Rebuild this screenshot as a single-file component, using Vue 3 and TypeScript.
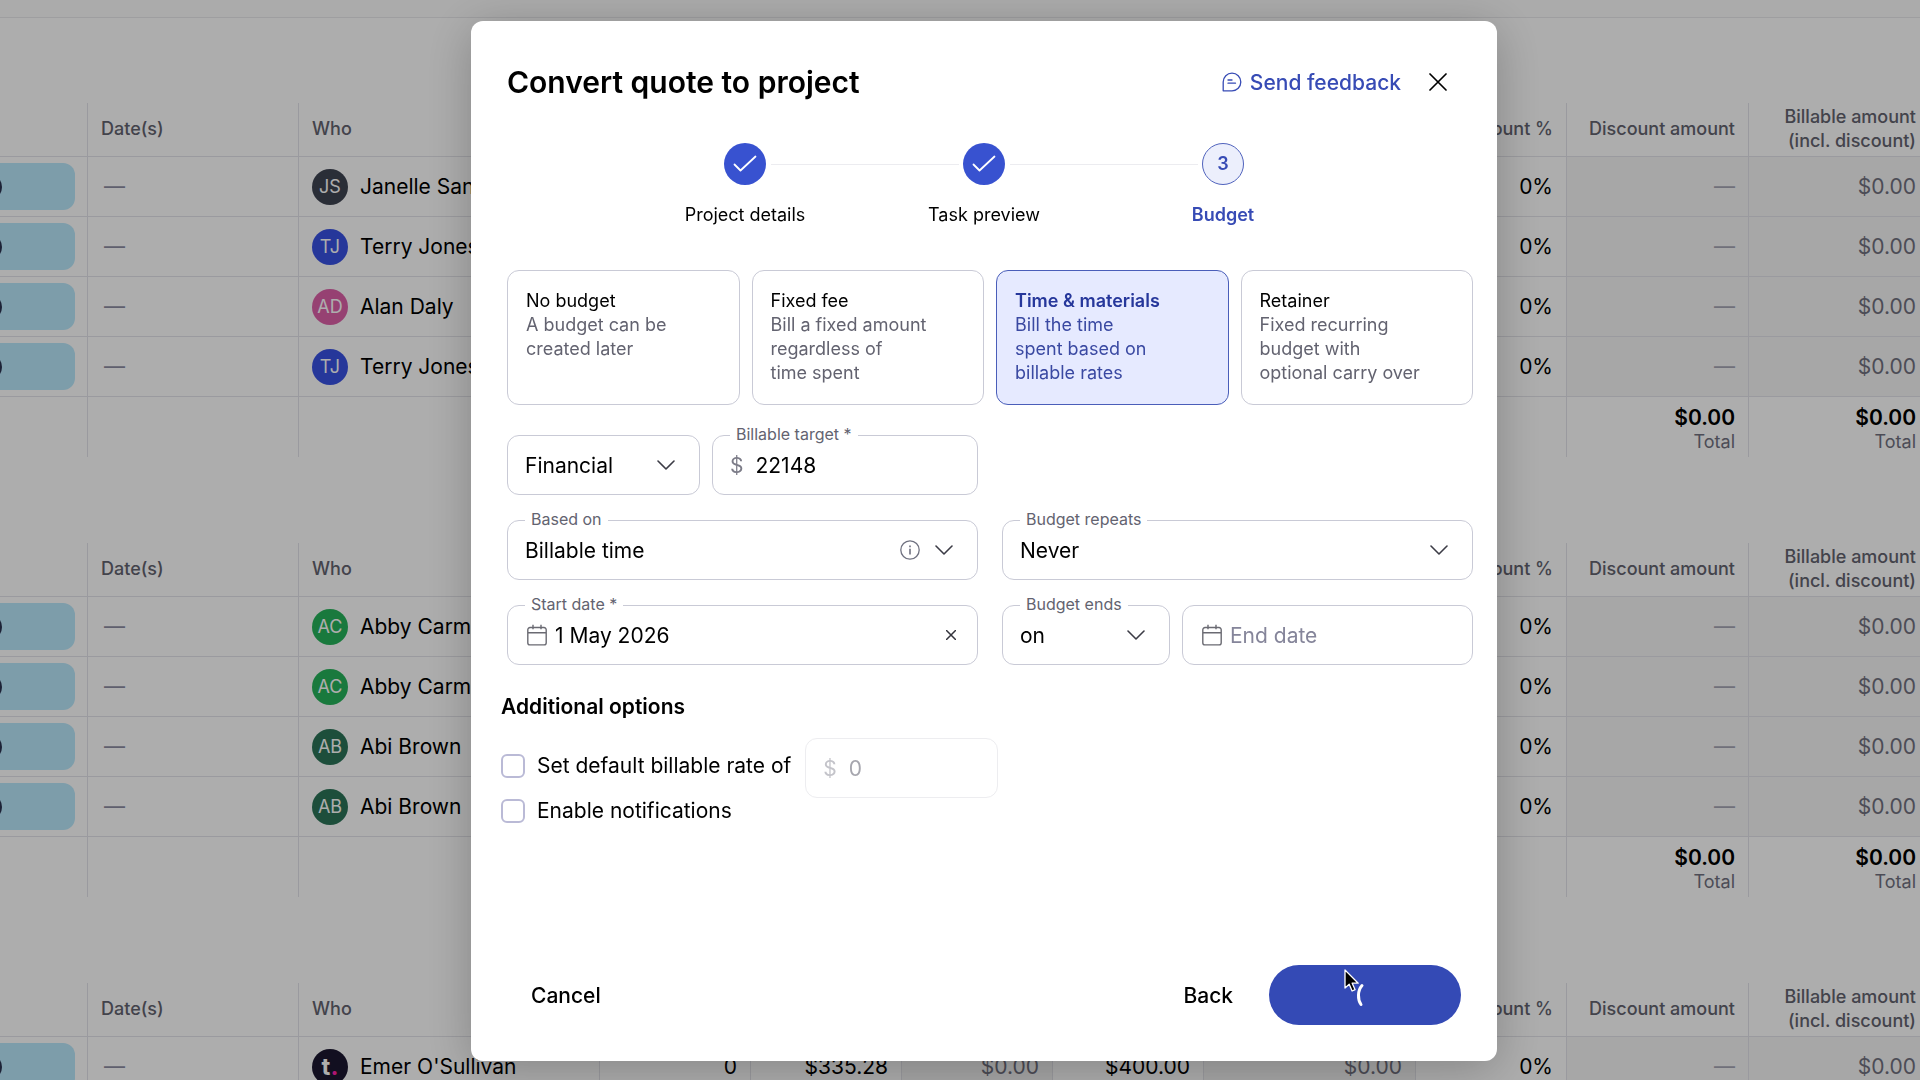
<script setup lang="ts">
import { ref } from 'vue'

interface Row {
  initials: string
  color: string
  name: string
  figures?: string[]
}

interface Group {
  rows: Row[]
  totals: boolean
}

const groups: Group[] = [
  {
    totals: true,
    rows: [
      { initials: 'JS', color: '#3f4452', name: 'Janelle Sanders' },
      { initials: 'TJ', color: '#3851e4', name: 'Terry Jones' },
      { initials: 'AD', color: '#de61a9', name: 'Alan Daly' },
      { initials: 'TJ', color: '#3851e4', name: 'Terry Jones' },
    ],
  },
  {
    totals: true,
    rows: [
      { initials: 'AC', color: '#26b35a', name: 'Abby Carmichael' },
      { initials: 'AC', color: '#26b35a', name: 'Abby Carmichael' },
      { initials: 'AB', color: '#2b7458', name: 'Abi Brown' },
      { initials: 'AB', color: '#2b7458', name: 'Abi Brown' },
    ],
  },
  {
    totals: false,
    rows: [
      {
        initials: 't',
        color: '#1b1730',
        name: "Emer O'Sullivan",
        figures: ['0', '$335.28', '$0.00', '$400.00', '$0.00'],
      },
    ],
  },
]

const budgetTypes = [
  { id: 'none', title: 'No budget', lines: ['A budget can be', 'created later'] },
  { id: 'fixed', title: 'Fixed fee', lines: ['Bill a fixed amount', 'regardless of', 'time spent'] },
  { id: 'time', title: 'Time & materials', lines: ['Bill the time', 'spent based on', 'billable rates'] },
  { id: 'retainer', title: 'Retainer', lines: ['Fixed recurring', 'budget with', 'optional carry over'] },
]

const selected = ref('time')
const target = ref('22148')
const startDate = ref('1 May 2026')
const endDate = ref('')
const rate = ref('0')
const useRate = ref(false)
const notify = ref(false)
</script>

<template>
  <div class="page">
    <div class="topbar"></div>
    <main class="quote">
      <table v-for="(group, g) in groups" :key="g" class="grid">
        <colgroup>
          <col class="c-pill" />
          <col class="c-date" />
          <col />
          <col class="c-num" />
          <col class="c-num" />
          <col class="c-num" />
          <col class="c-num" />
          <col class="c-wide" />
          <col class="c-num" />
          <col class="c-disc" />
          <col class="c-last" />
        </colgroup>
        <thead>
          <tr>
            <th></th>
            <th class="left">Date(s)</th>
            <th class="left">Who</th>
            <th></th>
            <th></th>
            <th></th>
            <th></th>
            <th></th>
            <th>Discount %</th>
            <th>Discount amount</th>
            <th>Billable amount<br />(incl. discount)</th>
          </tr>
        </thead>
        <tbody>
          <tr v-for="(row, i) in group.rows" :key="i">
            <td class="pill-cell"><div class="pill"><span class="knob"></span></div></td>
            <td class="left dash strong">—</td>
            <td class="left">
              <div class="who">
                <span v-if="row.initials !== 't'" class="avatar" :style="{ background: row.color }">{{ row.initials }}</span>
                <span v-else class="avatar brand" :style="{ background: row.color }">t<i>.</i></span>
                <span>{{ row.name }}</span>
              </div>
            </td>
            <td>{{ row.figures?.[0] }}</td>
            <td>{{ row.figures?.[1] }}</td>
            <td class="locked">{{ row.figures?.[2] }}</td>
            <td>{{ row.figures?.[3] }}</td>
            <td class="locked">{{ row.figures?.[4] }}</td>
            <td>0%</td>
            <td class="locked dash">—</td>
            <td class="locked">$0.00</td>
          </tr>
        </tbody>
        <tfoot v-if="group.totals">
          <tr>
            <td v-for="n in 9" :key="n"></td>
            <td v-for="n in 2" :key="'t' + n"><strong>$0.00</strong><small>Total</small></td>
          </tr>
        </tfoot>
      </table>
    </main>

    <div class="overlay">
      <section class="modal" role="dialog" aria-labelledby="dialog-title">
        <header class="head">
          <h1 id="dialog-title">Convert quote to project</h1>
          <a href="#" class="feedback">
            <svg width="20" height="20" viewBox="0 0 20 20" fill="none" stroke="currentColor" stroke-width="1.3" stroke-linejoin="round" stroke-linecap="round">
              <path d="M1.2 18.8V10A8.8 8.8 0 1 1 10 18.8Z" />
              <path d="M6 8h4M6 11.2h7.5" />
            </svg>
            Send feedback
          </a>
          <button type="button" class="icon-btn close" aria-label="Close">
            <svg width="18" height="18" viewBox="0 0 18 18" fill="none" stroke="currentColor" stroke-width="1.7" stroke-linecap="round"><path d="M1 1l16 16M17 1L1 17" /></svg>
          </button>
        </header>

        <ol class="steps">
          <li v-for="label in ['Project details', 'Task preview']" :key="label">
            <span class="dot done">
              <svg width="24" height="18" viewBox="0 0 24 18" fill="none" stroke="#fff" stroke-width="1.8" stroke-linecap="round" stroke-linejoin="round"><path d="M1.5 9.5l6 6L22.5 1.5" /></svg>
            </span>
            {{ label }}
          </li>
          <li class="current"><span class="dot">3</span>Budget</li>
        </ol>

        <div class="cards">
          <button
            v-for="type in budgetTypes"
            :key="type.id"
            type="button"
            class="card"
            :class="{ active: selected === type.id }"
            @click="selected = type.id"
          >
            <b>{{ type.title }}</b>
            <span v-for="line in type.lines" :key="line">{{ line }}</span>
          </button>
        </div>

        <div class="form">
          <div class="half">
            <div class="field unit">
              <select aria-label="Budget unit"><option>Financial</option></select>
              <svg class="chev" viewBox="0 0 18 10"><path d="M1 1l8 8 8-8" /></svg>
            </div>
            <div class="field grow">
              <label for="target">Billable target *</label>
              <span class="prefix">$</span>
              <input id="target" v-model="target" type="text" />
            </div>
          </div>
          <div class="half"></div>

          <div class="half">
            <div class="field grow">
              <label for="based">Based on</label>
              <select id="based"><option>Billable time</option></select>
              <svg class="info" width="20" height="20" viewBox="0 0 20 20" fill="none" stroke="#6f7180" stroke-width="1.3"><circle cx="10" cy="10" r="9.2" /><path d="M10 8.8v5.6M10 5.4v1.8" stroke-width="1.6" /></svg>
              <svg class="chev" viewBox="0 0 18 10"><path d="M1 1l8 8 8-8" /></svg>
            </div>
          </div>
          <div class="half">
            <div class="field grow">
              <label for="repeats">Budget repeats</label>
              <select id="repeats"><option>Never</option></select>
              <svg class="chev" viewBox="0 0 18 10"><path d="M1 1l8 8 8-8" /></svg>
            </div>
          </div>

          <div class="half">
            <div class="field grow">
              <label for="start">Start date *</label>
              <svg class="cal" viewBox="0 0 20 22"><path d="M3 3.5h14a2.2 2.2 0 0 1 2.2 2.2v13a2.2 2.2 0 0 1-2.2 2.2H3a2.2 2.2 0 0 1-2.2-2.2v-13A2.2 2.2 0 0 1 3 3.5ZM.8 8.8h18.4M6 .8v4.5M14 .8v4.5" /></svg>
              <input id="start" v-model="startDate" type="text" />
              <button type="button" class="icon-btn clear" aria-label="Clear start date">
                <svg width="10" height="10" viewBox="0 0 10 10" fill="none" stroke="currentColor" stroke-width="1.5"><path d="M0 0l10 10M10 0L0 10" /></svg>
              </button>
            </div>
          </div>
          <div class="half">
            <div class="field ends">
              <label for="ends">Budget ends</label>
              <select id="ends"><option>on</option></select>
              <svg class="chev" viewBox="0 0 18 10"><path d="M1 1l8 8 8-8" /></svg>
            </div>
            <div class="field grow">
              <svg class="cal" viewBox="0 0 20 22"><path d="M3 3.5h14a2.2 2.2 0 0 1 2.2 2.2v13a2.2 2.2 0 0 1-2.2 2.2H3a2.2 2.2 0 0 1-2.2-2.2v-13A2.2 2.2 0 0 1 3 3.5ZM.8 8.8h18.4M6 .8v4.5M14 .8v4.5" /></svg>
              <input v-model="endDate" type="text" placeholder="End date" aria-label="End date" />
            </div>
          </div>
        </div>

        <div class="options">
          <h2>Additional options</h2>
          <div class="option-row">
            <label class="check"><input v-model="useRate" type="checkbox" />Set default billable rate of</label>
            <div class="field rate">
              <span class="prefix">$</span>
              <input v-model="rate" type="text" aria-label="Default billable rate" disabled />
            </div>
          </div>
          <label class="check"><input v-model="notify" type="checkbox" />Enable notifications</label>
        </div>

        <footer class="foot">
          <button type="button" class="text-btn">Cancel</button>
          <span class="spacer"></span>
          <button type="button" class="text-btn">Back</button>
          <button type="button" class="primary" aria-label="Creating project">
            <svg class="spinner" width="24" height="24" viewBox="0 0 24 24" fill="none" stroke="#fff" stroke-width="3" stroke-linecap="round"><path d="M9 2.5C4.5 7.5 4.5 16.5 8 21.5" /></svg>
            <svg class="cursor" width="16" height="24" viewBox="0 0 16 24"><path d="M1 1v18l4.2-3.8 2.9 6.8 3-1.3-2.9-6.5h6z" fill="#000" stroke="#fff" stroke-width="1.3" stroke-linejoin="round" /></svg>
          </button>
        </footer>
      </section>
    </div>
  </div>
</template>

<style>
body {
  margin: 0;
  background: #fff;
}
</style>

<style scoped>
* {
  box-sizing: border-box;
}
.page {
  height: 100vh;
  overflow: hidden;
  font-family: Inter, 'Liberation Sans', sans-serif;
  font-size: 21px;
  color: #000;
}
button,
input,
select {
  font: inherit;
  color: inherit;
}
.topbar {
  height: 18px;
  background: #fcfcfc;
  border-bottom: 1px solid #e9e9ec;
}
.quote {
  display: flex;
  flex-direction: column;
  gap: 86px;
  padding-top: 85px;
}

/* quote tables */
.grid {
  width: 100%;
  table-layout: fixed;
  border-collapse: separate;
  border-spacing: 0;
  line-height: 24px;
}
.c-pill { width: 88px; }
.c-date { width: 211px; }
.c-num { width: 151px; }
.c-wide { width: 212px; }
.c-disc { width: 182px; }
.c-last { width: 171px; }
.grid th,
.grid td {
  padding: 0 13px 0 0;
  text-align: right;
  white-space: nowrap;
  border-right: 1px solid #e4e4ea;
  border-bottom: 1px solid #e4e4ea;
}
.grid th {
  height: 54px;
  padding-bottom: 2px;
  font-size: 18px;
  font-weight: 500;
  color: #63636f;
}
.grid td {
  height: 60px;
}
.grid .left {
  text-align: left;
  padding-left: 13px;
  padding-right: 0;
}
.grid th:last-child,
.grid td:last-child {
  padding-right: 4px;
  border-right: 0;
}
.grid .locked {
  background: #f6f6f6;
  color: #71717f;
}
.grid .dash {
  color: #a5a5b4;
}
.grid .strong {
  color: #8d8da2;
  padding-left: 16px;
}
.grid tfoot td {
  padding-top: 6px;
  border-bottom: 0;
}
.grid strong,
.grid small {
  display: block;
  font-weight: 600;
}
.grid small {
  font-size: 18px;
  font-weight: 400;
  color: #71717f;
}
.grid .pill-cell {
  padding: 0 12px 0 0;
}
.pill {
  display: flex;
  align-items: center;
  height: 47px;
  border-radius: 0 12px 12px 0;
  background: #b8e7fb;
}
.knob {
  width: 26px;
  height: 26px;
  margin-left: -24px;
  border-radius: 50%;
  background: #2b3350;
}
.who {
  display: flex;
  align-items: center;
  gap: 12px;
}
.avatar {
  width: 36px;
  height: 36px;
  border-radius: 50%;
  color: #fff;
  font-size: 18px;
  line-height: 36px;
  text-align: center;
}
.brand {
  font-size: 24px;
  font-weight: 700;
}
.brand i {
  font-style: normal;
  color: #ff1fa8;
}

/* dialog */
.overlay {
  position: fixed;
  inset: 0;
  display: flex;
  justify-content: center;
  padding: 21px 0 19px 48px;
  background: rgba(0, 0, 0, 0.32);
}
.modal {
  display: flex;
  flex-direction: column;
  width: 1026px;
  max-width: 100%;
  padding: 36px 24px 36px 36px;
  border-radius: 12px;
  background: #fff;
  box-shadow: 0 8px 48px rgba(0, 0, 0, 0.24);
}
.head {
  display: flex;
  align-items: center;
  height: 50px;
}
h1 {
  flex: 1;
  margin: 0;
  font-size: 30px;
  line-height: 36px;
  font-weight: 600;
}
.feedback {
  display: flex;
  align-items: center;
  gap: 8px;
  color: #374bb5;
  font-weight: 500;
  text-decoration: none;
}
.icon-btn {
  display: flex;
  padding: 0;
  border: 0;
  background: none;
}
.close {
  margin: 0 26px 0 28px;
}
.steps {
  display: flex;
  align-self: center;
  margin: 36px 12px 0 0;
  padding: 0;
  list-style: none;
  font-size: 18px;
  line-height: 24px;
}
.steps li {
  position: relative;
  display: flex;
  flex-direction: column;
  align-items: center;
  gap: 18px;
  width: 239px;
}
.steps li + li::before {
  content: '';
  position: absolute;
  top: 21px;
  left: -94px;
  width: 188px;
  border-top: 1px solid #ececf0;
}
.dot {
  display: flex;
  align-items: center;
  justify-content: center;
  width: 42px;
  height: 42px;
  border: 1px solid #5063bd;
  border-radius: 50%;
  background: #eceffc;
}
.dot.done {
  border: 0;
  background: #3852d0;
}
.current {
  color: #374bb5;
  font-weight: 600;
}
.cards {
  display: grid;
  grid-template-columns: repeat(4, 1fr);
  gap: 12px;
  margin-top: 43px;
}
.card {
  display: flex;
  flex-direction: column;
  min-height: 135px;
  padding: 18px;
  border: 1px solid #c9cad6;
  border-radius: 12px;
  background: #fff;
  text-align: left;
  font-size: 18px;
  line-height: 24px;
  color: #636370;
}
.card b {
  font-weight: 400;
  color: #000;
}
.card.active {
  border-color: #4a5eb9;
  background: #e6eaff;
  color: #3a49a2;
}
.card.active b {
  font-weight: 600;
  color: #26379b;
}
.form {
  display: grid;
  grid-template-columns: repeat(2, minmax(0, 1fr));
  gap: 25px 24px;
  margin-top: 30px;
}
.half {
  display: flex;
  gap: 12px;
}
.field {
  position: relative;
  display: flex;
  align-items: center;
  height: 60px;
  padding: 0 17px;
  border: 1px solid #c9cad6;
  border-radius: 12px;
}
.unit { width: 193px; }
.ends { width: 168px; }
.grow {
  flex: 1;
  min-width: 0;
}
.field label {
  position: absolute;
  top: -12px;
  left: 17px;
  padding: 0 6px;
  background: #fff;
  font-size: 16px;
  line-height: 20px;
  color: #636370;
}
.field input,
.field select {
  flex: 1;
  width: 0;
  min-width: 0;
  height: 56px;
  padding: 0;
  border: 0;
  outline: 0;
  background: none;
  appearance: none;
}
.field input::placeholder {
  color: #85859a;
  opacity: 1;
}
.prefix {
  margin-right: 12px;
  color: #7c7c88;
}
.chev {
  width: 18px;
  height: 10px;
  margin-right: 7px;
  fill: none;
  stroke: #3c3c46;
  stroke-width: 1.6;
  stroke-linecap: round;
  stroke-linejoin: round;
}
.info {
  margin-right: 15px;
}
.cal {
  width: 20px;
  height: 22px;
  margin: 0 8px 0 2px;
  fill: none;
  stroke: #6a6a72;
  stroke-width: 1.4;
}
.clear {
  margin-right: 4px;
  color: #33333b;
}
.options {
  margin: 30px 0 0 -6px;
}
h2 {
  margin: 0;
  font-size: 21px;
  line-height: 24px;
  font-weight: 600;
}
.option-row {
  display: flex;
  gap: 14px;
  margin-top: 19px;
}
.option-row .check {
  align-self: flex-start;
  padding-top: 15px;
}
.check {
  display: flex;
  align-items: center;
  gap: 12px;
  line-height: 26px;
}
.check input {
  width: 24px;
  height: 24px;
  margin: 0;
  border: 2px solid #babad6;
  border-radius: 6px;
  background: #fff;
  appearance: none;
}
.rate {
  width: 193px;
  border-color: #ededf0;
}
.rate .prefix {
  color: #c4c4ca;
}
.rate input {
  color: #a6a6ae;
}
.foot {
  display: flex;
  align-items: center;
  gap: 36px;
  margin-top: auto;
  padding: 0 12px 0 24px;
}
.spacer {
  flex: 1;
}
.text-btn {
  padding: 0;
  border: 0;
  background: none;
  font-weight: 500;
}
.primary {
  position: relative;
  display: flex;
  align-items: center;
  justify-content: center;
  width: 192px;
  height: 60px;
  border: 0;
  border-radius: 30px;
  background: #344ab5;
}
.cursor {
  position: absolute;
  top: 4px;
  left: 75px;
}
</style>
